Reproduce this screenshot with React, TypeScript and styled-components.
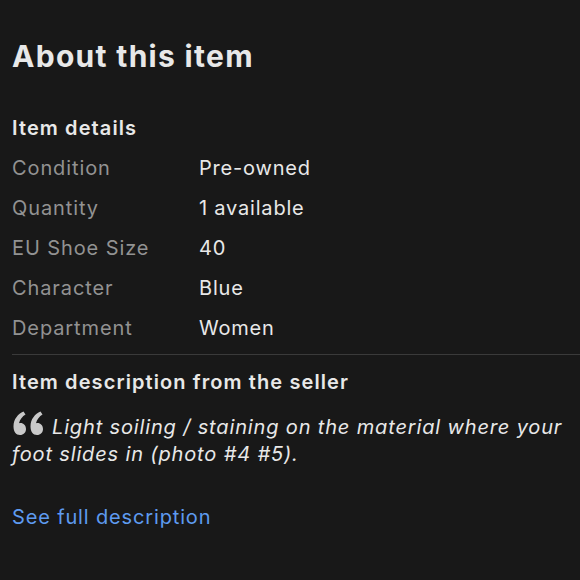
import React from 'react'
import styled, { createGlobalStyle } from 'styled-components'

const GlobalStyle = createGlobalStyle`
  html, body {
    margin: 0;
    padding: 0;
    background: #181818;
  }
  body {
    font-family: Inter, "Noto Sans", "Liberation Sans", sans-serif;
    -webkit-font-smoothing: antialiased;
  }
`

const Page = styled.div`
  width: 580px;
  height: 580px;
  box-sizing: border-box;
  background: #181818;
  padding: 36px 0 0 12px;
  overflow: hidden;
`

const Title = styled.h1`
  margin: 0;
  color: #e8e8e8;
  font-size: 30px;
  line-height: 40px;
  font-weight: 700;
  letter-spacing: 1.3px;
`

const SectionTitle = styled.h2`
  margin: 0;
  color: #e8e8e8;
  font-size: 20px;
  line-height: 28px;
  font-weight: 600;
  letter-spacing: 1.1px;
`

const Details = styled.div`
  margin-top: 38px;
`

const Table = styled.dl`
  margin: 6px 0 0;
  display: grid;
  grid-template-columns: 187px 1fr;
  grid-auto-rows: 40px;
  align-items: center;
`

const Label = styled.dt`
  color: #929292;
  font-size: 20px;
  line-height: 28px;
  letter-spacing: 0.9px;
`

const Value = styled.dd`
  margin: 0;
  color: #e8e8e8;
  font-size: 20px;
  line-height: 28px;
  letter-spacing: 0.8px;
`

const Divider = styled.hr`
  margin: 6px 0 0;
  border: none;
  height: 1px;
  background: #3a3a3a;
`

const Description = styled.div`
  padding-top: 13px;
  padding-right: 12px;
`

const Quote = styled.p`
  margin: 14px 0 0;
  color: #e8e8e8;
  font-size: 20px;
  line-height: 27px;
  font-style: italic;
  letter-spacing: 0.85px;
`

const QuoteMark = styled.svg`
  width: 32px;
  height: 26px;
  margin-right: 8px;
  vertical-align: -2px;
`

const Link = styled.a`
  display: inline-block;
  margin-top: 35px;
  color: #5e9bf0;
  font-size: 20px;
  line-height: 28px;
  letter-spacing: 0.85px;
  text-decoration: none;
`

const QuoteIcon = () => (
  <QuoteMark viewBox="0 0 32 26">
    <path
      d="M11.5 1.5 C6 4 1.5 9 1.5 16.5 C1.5 21.5 4 25 8 25 C11.5 25 14 22.5 14 19 C14 15.5 11.5 13 8.5 13 C8 13 7.5 13 7 13.2 C7.8 9.5 10.5 6.3 13.5 4.5 Z"
      fill="#c9c9c9"
    />
    <path
      d="M28.5 1.5 C23 4 18.5 9 18.5 16.5 C18.5 21.5 21 25 25 25 C28.5 25 31 22.5 31 19 C31 15.5 28.5 13 25.5 13 C25 13 24.5 13 24 13.2 C24.8 9.5 27.5 6.3 30.5 4.5 Z"
      fill="#c9c9c9"
    />
  </QuoteMark>
)

const rows: [string, string][] = [
  ['Condition', 'Pre-owned'],
  ['Quantity', '1 available'],
  ['EU Shoe Size', '40'],
  ['Character', 'Blue'],
  ['Department', 'Women'],
]

export default function App() {
  return (
    <Page>
      <GlobalStyle />
      <Title>About this item</Title>
      <Details>
        <SectionTitle>Item details</SectionTitle>
        <Table>
          {rows.map(([label, value]) => (
            <React.Fragment key={label}>
              <Label>{label}</Label>
              <Value>{value}</Value>
            </React.Fragment>
          ))}
        </Table>
      </Details>
      <Divider />
      <Description>
        <SectionTitle>Item description from the seller</SectionTitle>
        <Quote>
          <QuoteIcon />
          Light soiling / staining on the material where your foot slides in (photo #4 #5).
        </Quote>
        <Link href="#">See full description</Link>
      </Description>
    </Page>
  )
}
